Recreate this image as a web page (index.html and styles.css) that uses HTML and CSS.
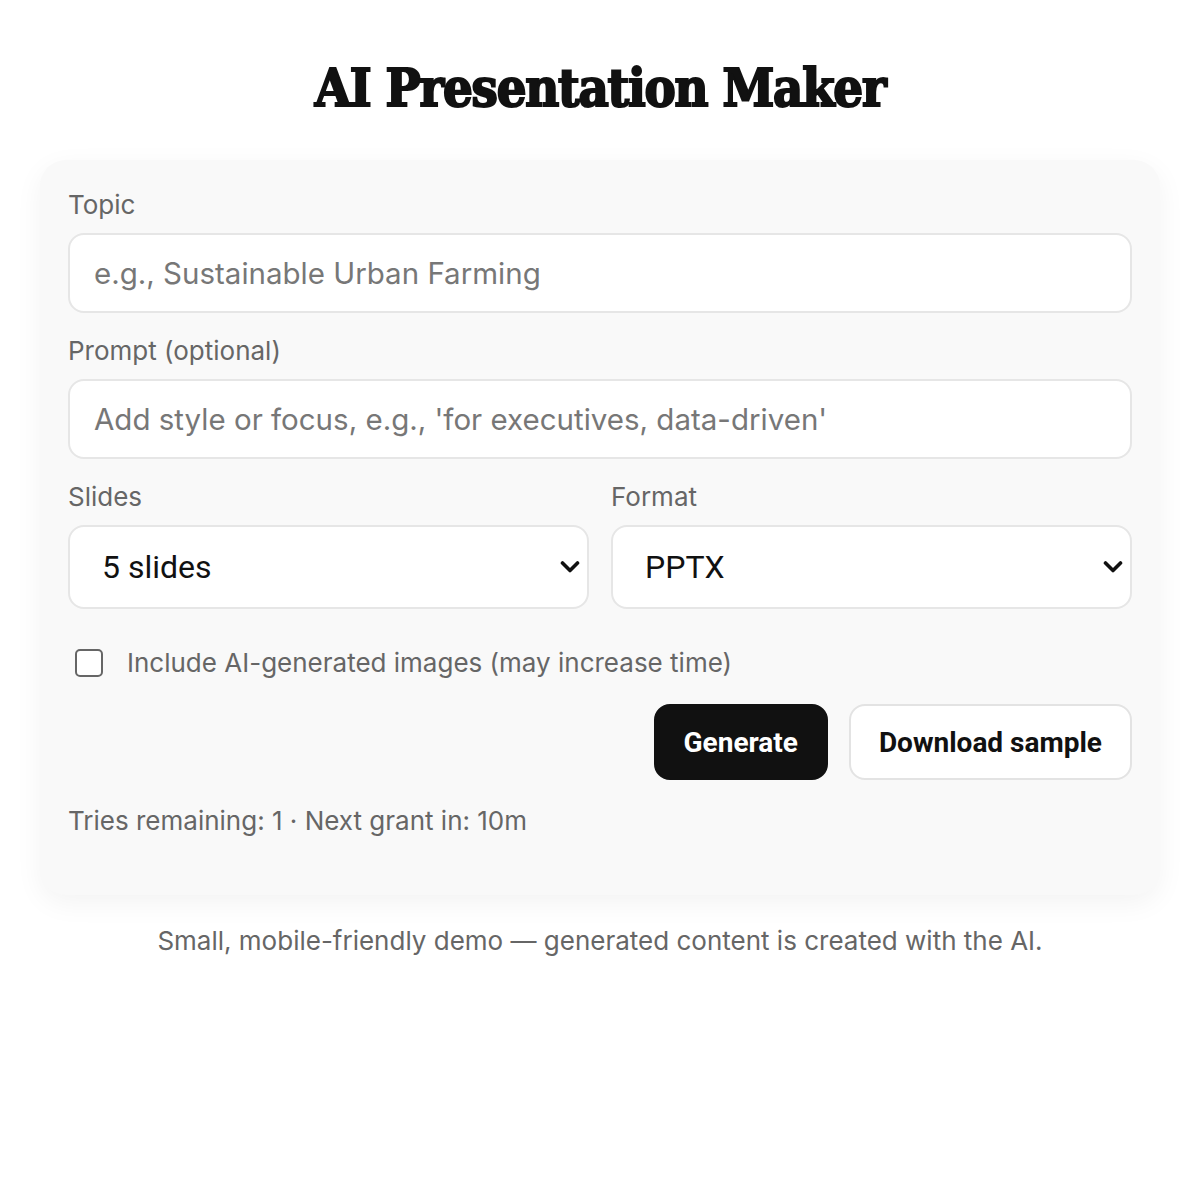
FILE: index.html
```html
<!DOCTYPE html>
<html lang="en">
<head>
<meta charset="utf-8">
<title>AI Presentation Maker</title>
<link rel="stylesheet" href="styles.css">
</head>
<body>
<main class="page">
  <h1 class="title">AI Presentation Maker</h1>
  <section class="card">
    <div class="field">
      <label class="label" for="topic">Topic</label>
      <input class="input" id="topic" type="text" placeholder="e.g., Sustainable Urban Farming">
    </div>
    <div class="field">
      <label class="label" for="prompt">Prompt (optional)</label>
      <input class="input" id="prompt" type="text" placeholder="Add style or focus, e.g., 'for executives, data-driven'">
    </div>
    <div class="row">
      <div class="field">
        <label class="label" for="slides">Slides</label>
        <select class="select" id="slides">
          <option>5 slides</option>
          <option>8 slides</option>
          <option>10 slides</option>
        </select>
      </div>
      <div class="field">
        <label class="label" for="format">Format</label>
        <select class="select" id="format">
          <option>PPTX</option>
          <option>PDF</option>
        </select>
      </div>
    </div>
    <label class="check">
      <input class="checkbox" type="checkbox">
      <span>Include AI-generated images (may increase time)</span>
    </label>
    <div class="actions">
      <button class="btn btn-primary" type="button">Generate</button>
      <button class="btn btn-secondary" type="button">Download sample</button>
    </div>
    <p class="status">Tries remaining: 1 · Next grant in: 10m</p>
  </section>
  <p class="footer">Small, mobile-friendly demo — generated content is created with the AI.</p>
</main>
</body>
</html>
```

FILE: styles.css
```css
* { box-sizing: border-box; }
html, body { margin: 0; padding: 0; background: #ffffff; }
body { font-family: Inter, "Noto Sans", sans-serif; color: #111; }

.page {
  width: 1120px;
  margin: 0 auto;
  padding-top: 54px;
}

.title {
  margin: 0;
  height: 106px;
  text-align: center;
  font-family: "DejaVu Serif", serif;
  font-stretch: condensed;
  font-weight: 700;
  font-size: 52px;
  line-height: 68px;
  letter-spacing: -1.2px;
  color: #111;
  -webkit-text-stroke: 2px #111;
}

.card {
  background: #f9f9f9;
  border-radius: 26px;
  box-shadow: 0 8px 28px rgba(0, 0, 0, 0.05);
  padding: 30px 28px 59px 28px;
  display: flex;
  flex-direction: column;
  gap: 23px;
}

.field {
  display: flex;
  flex-direction: column;
  gap: 13px;
  flex: 1;
  min-width: 0;
}

.label {
  font-size: 26px;
  line-height: 30px;
  color: #666;
}

.input {
  height: 80px;
  width: 100%;
  border: 2px solid #e6e6e6;
  border-radius: 16px;
  background: #fff;
  padding: 0 24px;
  font-family: Inter, sans-serif;
  font-size: 29.5px;
  color: #111;
  outline: none;
}
.input::placeholder { color: #777; }

.row {
  display: flex;
  gap: 22px;
}

.select {
  appearance: none;
  -webkit-appearance: none;
  height: 84px;
  width: 100%;
  border: 2px solid #e6e6e6;
  border-radius: 16px;
  background-color: #fff;
  background-image: url("data:image/svg+xml,%3Csvg xmlns='http://www.w3.org/2000/svg' width='20' height='14' viewBox='0 0 20 14'%3E%3Cpath d='M2.5 3 L10 10.5 L17.5 3' fill='none' stroke='%23111' stroke-width='3.6' stroke-linecap='round' stroke-linejoin='round'/%3E%3C/svg%3E");
  background-repeat: no-repeat;
  background-position: right 7px center;
  background-size: 20px 14px;
  padding: 0 40px 0 32px;
  font-family: Roboto, sans-serif;
  font-size: 32px;
  color: #111;
  outline: none;
}

.check {
  display: flex;
  align-items: center;
  gap: 24px;
  margin-top: 16px;
  padding-left: 7px;
  font-size: 26px;
  line-height: 30px;
  color: #666;
}

.checkbox {
  appearance: none;
  -webkit-appearance: none;
  margin: 0;
  width: 28px;
  height: 28px;
  border: 2px solid #666;
  border-radius: 5px;
  background: #fff;
  flex: none;
}

.actions {
  display: flex;
  justify-content: flex-end;
  gap: 21px;
  margin-top: 3px;
}

.btn {
  height: 76px;
  border-radius: 16px;
  font-family: Roboto, sans-serif;
  font-weight: 700;
  font-size: 28px;
  padding: 0 28px;
  cursor: pointer;
}
.btn-primary {
  background: #111;
  color: #fff;
  border: 2px solid #111;
}
.btn-secondary {
  background: #fff;
  color: #111;
  border: 2px solid #e3e3e3;
}

.status {
  margin: 3px 0 0 0;
  font-size: 26px;
  line-height: 30px;
  color: #666;
}

.footer {
  margin: 31px 0 0 0;
  text-align: center;
  font-size: 26px;
  line-height: 30px;
  color: #666;
}
```
